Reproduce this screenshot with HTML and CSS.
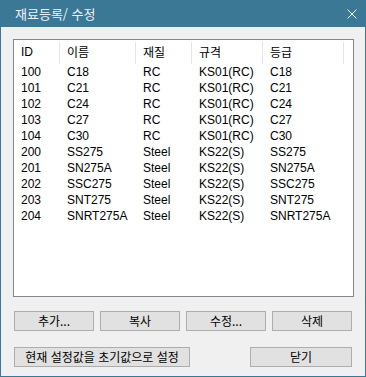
FILE: index.html
```html
<!DOCTYPE html>
<html lang="ko">
<head>
  <meta charset="UTF-8" />
  <title>재료등록/ 수정</title>
  <link rel="stylesheet" href="styles.css">
</head>
<body>
  <div class="window">
    <!-- Title bar -->
    <div class="titlebar">
      <span class="title">재료등록/ 수정</span>
      <svg class="close" width="10" height="10" viewBox="0 0 10 10">
        <path d="M0.5 0.5 L9.5 9.5 M9.5 0.5 L0.5 9.5" stroke="#f0f4f6" stroke-width="1" fill="none"/>
      </svg>
    </div>

    <div class="client">
      <!-- Material list -->
      <div class="listview">
        <div class="row header">
          <div class="cell">ID</div>
          <div class="cell">이름</div>
          <div class="cell">재질</div>
          <div class="cell">규격</div>
          <div class="cell">등급</div>
        </div>
        <div class="row"><div class="cell">100</div><div class="cell">C18</div><div class="cell">RC</div><div class="cell">KS01(RC)</div><div class="cell">C18</div></div>
        <div class="row"><div class="cell">101</div><div class="cell">C21</div><div class="cell">RC</div><div class="cell">KS01(RC)</div><div class="cell">C21</div></div>
        <div class="row"><div class="cell">102</div><div class="cell">C24</div><div class="cell">RC</div><div class="cell">KS01(RC)</div><div class="cell">C24</div></div>
        <div class="row"><div class="cell">103</div><div class="cell">C27</div><div class="cell">RC</div><div class="cell">KS01(RC)</div><div class="cell">C27</div></div>
        <div class="row"><div class="cell">104</div><div class="cell">C30</div><div class="cell">RC</div><div class="cell">KS01(RC)</div><div class="cell">C30</div></div>
        <div class="row"><div class="cell">200</div><div class="cell">SS275</div><div class="cell">Steel</div><div class="cell">KS22(S)</div><div class="cell">SS275</div></div>
        <div class="row"><div class="cell">201</div><div class="cell">SN275A</div><div class="cell">Steel</div><div class="cell">KS22(S)</div><div class="cell">SN275A</div></div>
        <div class="row"><div class="cell">202</div><div class="cell">SSC275</div><div class="cell">Steel</div><div class="cell">KS22(S)</div><div class="cell">SSC275</div></div>
        <div class="row"><div class="cell">203</div><div class="cell">SNT275</div><div class="cell">Steel</div><div class="cell">KS22(S)</div><div class="cell">SNT275</div></div>
        <div class="row"><div class="cell">204</div><div class="cell">SNRT275A</div><div class="cell">Steel</div><div class="cell">KS22(S)</div><div class="cell">SNRT275A</div></div>
      </div>

      <!-- Buttons -->
      <div class="btn-row">
        <button class="btn">추가...</button>
        <button class="btn">복사</button>
        <button class="btn">수정...</button>
        <button class="btn">삭제</button>
      </div>
      <div class="btn-row bottom">
        <button class="btn wide">현재 설정값을 초기값으로 설정</button>
        <button class="btn close-btn">닫기</button>
      </div>
    </div>
  </div>
</body>
</html>
```

FILE: styles.css
```css
* {
  margin: 0;
  padding: 0;
  box-sizing: border-box;
}
body {
  background-color: #f0f0f0;
  font-family: "Liberation Sans", "Noto Sans CJK KR", sans-serif;
  font-size: 12px;
  color: #000;
}
.window {
  width: 366px;
  height: 377px;
  border: 1px solid #3a7896;
  border-top: none;
  background-color: #f0f0f0;
}
/* Title bar */
.titlebar {
  height: 27px;
  margin: 0 -1px;
  background-color: #3a7896;
  display: flex;
  align-items: center;
  justify-content: space-between;
  padding: 0 9px 0 15px;
}
.title {
  color: #eef3f6;
  font-family: "Noto Sans CJK KR", sans-serif;
  font-size: 13px;
  line-height: 1;
}
.close {
  display: block;
}
/* Client area */
.client {
  padding: 12px 12px 0 12px;
}
.listview {
  width: 341px;
  height: 258px;
  background-color: #fff;
  border: 1px solid #828790;
}
.row {
  display: grid;
  grid-template-columns: 46px 76px 56px 71px 81px;
  height: 16px;
  line-height: 16px;
  white-space: nowrap;
}
.row .cell {
  padding-left: 7px;
}
.row.header {
  height: 24px;
  line-height: 24px;
}
.row.header .cell {
  position: relative;
  font-family: "Noto Sans CJK KR", sans-serif;
}
.row.header .cell:first-child {
  font-family: "Liberation Sans", sans-serif;
}
.row.header .cell::after {
  content: "";
  position: absolute;
  right: 0;
  top: 2px;
  bottom: 0;
  width: 1px;
  background-color: #e5e5e5;
}
/* Buttons */
.btn-row {
  display: flex;
  gap: 6px;
  margin-top: 14px;
  padding-left: 1px;
}
.btn-row.bottom {
  margin-top: 16px;
  justify-content: space-between;
  width: 339px;
}
.btn {
  width: 80px;
  height: 20px;
  background-color: #e1e1e1;
  border: 1px solid #adadad;
  font-family: "Noto Sans CJK KR", sans-serif;
  font-size: 12px;
  color: #000;
  line-height: 18px;
}
.btn.wide {
  width: 176px;
}
.btn.close-btn {
  width: 102px;
}
```
